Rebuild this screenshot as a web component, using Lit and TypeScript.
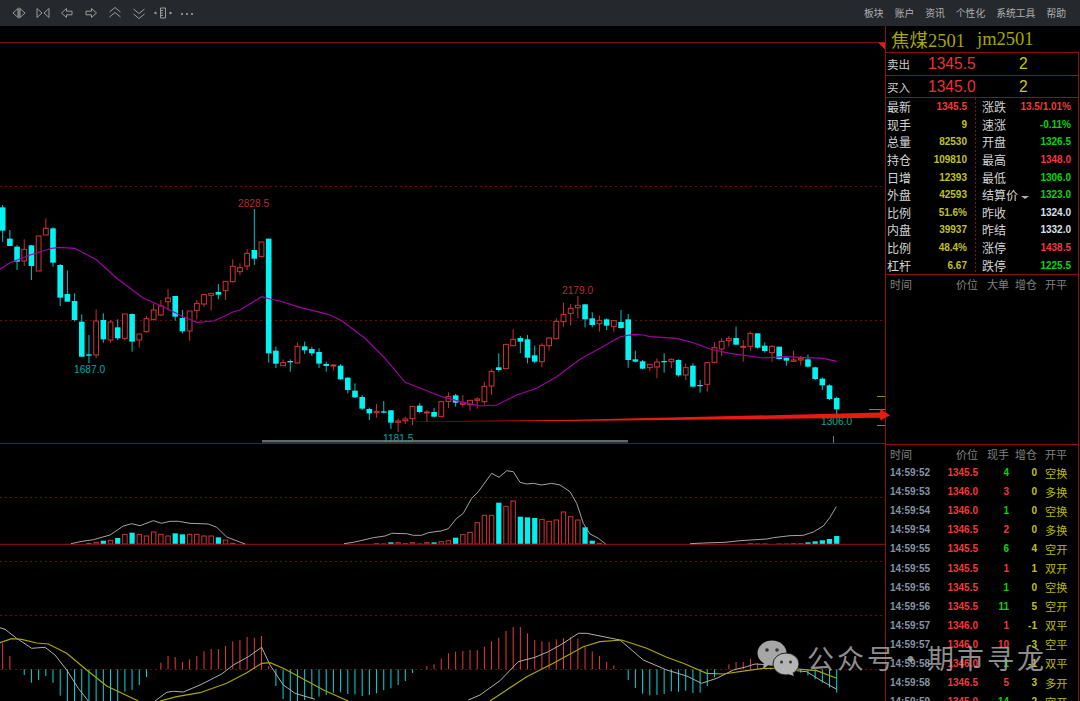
import { LitElement, html, css, svg } from "lit";
import { customElement } from "lit/decorators.js";

const STEP = 7.19;
const X0 = 2.67;
const cx = (i: number) => X0 + STEP * i;

// candles were read off 3x crops: [kind, wickTop, bodyTop, bodyBottom, wickBottom], kind 0 = cyan, 1 = red
type Row = [number, number, number, number, number];
const seg1: Row[] = [
  [0, 45, 52, 122, 155], [0, 120, 146, 168, 168], [0, 165, 170, 215, 240], [1, 148, 178, 213, 228],
  [0, 165, 166, 228, 270], [1, 138, 138, 243, 243], [1, 85, 115, 135, 135], [0, 112, 115, 218, 230],
  [0, 222, 225, 323, 348], [0, 241, 312, 335, 335], [0, 310, 333, 390, 395], [0, 373, 395, 500, 500],
  [0, 435, 493, 497, 520], [1, 358, 393, 495, 505], [0, 370, 390, 448, 458], [1, 390, 396, 450, 458],
  [0, 388, 412, 445, 450], [1, 372, 372, 445, 452], [0, 370, 372, 455, 485], [1, 432, 432, 450, 472],
  [1, 378, 386, 425, 428], [1, 340, 360, 388, 392], [1, 330, 348, 375, 378], [1, 297, 324, 335, 362],
  [0, 318, 318, 380, 392], [0, 360, 384, 424, 430], [1, 363, 363, 423, 452], [1, 330, 340, 361, 388],
  [1, 312, 314, 342, 350], [1, 310, 310, 316, 362], [0, 282, 306, 314, 328], [1, 273, 274, 302, 330],
  [1, 208, 229, 275, 277], [1, 220, 233, 245, 255], [1, 178, 190, 228, 240], [0, 57, 180, 206, 225],
  [1, 155, 156, 200, 200], [0, 146, 146, 490, 518],
];
const seg2: Row[] = [
  [0, 200, 212, 251, 264], [1, 238, 248, 257, 258], [0, 238, 243, 247, 275],
  [1, 187, 199, 249, 250], [0, 185, 199, 211, 222], [0, 200, 207, 220, 228], [0, 205, 216, 251, 264],
  [0, 245, 252, 258, 275], [1, 252, 255, 258, 272], [0, 252, 257, 298, 300], [0, 292, 293, 330, 340],
  [0, 310, 332, 352, 354], [0, 345, 351, 386, 390], [0, 383, 387, 400, 420], [1, 372, 394, 398, 413],
  [0, 363, 394, 398, 400], [0, 390, 391, 428, 447], [1, 415, 423, 427, 456], [1, 410, 417, 422, 432],
  [1, 378, 379, 416, 435], [0, 370, 377, 396, 400], [1, 390, 396, 399, 425], [0, 384, 396, 410, 412],
  [1, 362, 365, 410, 411], [1, 337, 350, 364, 384], [0, 342, 346, 368, 380], [1, 345, 369, 373, 382],
  [1, 360, 361, 374, 392], [1, 352, 357, 361, 386], [1, 305, 319, 365, 374], [1, 268, 274, 318, 345],
  [0, 220, 262, 270, 275], [1, 192, 193, 266, 267], [1, 148, 178, 197, 198], [0, 168, 174, 185, 220],
  [0, 165, 178, 233, 250], [0, 197, 226, 245, 250], [1, 190, 196, 245, 262], [1, 172, 174, 197, 212],
  [1, 115, 124, 176, 178], [1, 68, 103, 125, 140],
];
const seg3: Row[] = [
  [1, 72, 85, 100, 137], [1, 48, 76, 83, 115], [0, 72, 73, 118, 142], [0, 97, 115, 135, 142],
  [1, 107, 121, 131, 155], [0, 115, 118, 137, 150], [1, 122, 122, 139, 155], [0, 90, 126, 144, 146],
  [0, 102, 118, 240, 263], [0, 212, 238, 245, 247], [0, 240, 244, 266, 268], [1, 252, 253, 263, 273],
  [1, 235, 246, 261, 295], [0, 220, 243, 246, 278], [1, 235, 238, 245, 265], [0, 238, 240, 286, 290],
  [1, 250, 263, 285, 300], [0, 250, 257, 320, 322], [0, 300, 315, 318, 338], [1, 246, 248, 313, 335],
  [1, 186, 203, 247, 250], [1, 175, 184, 207, 228], [1, 168, 176, 182, 200], [0, 140, 174, 194, 195],
  [1, 180, 199, 202, 245], [1, 155, 160, 199, 212], [0, 160, 160, 203, 206], [0, 187, 197, 213, 218],
  [1, 195, 199, 218, 245], [0, 200, 200, 237, 238], [0, 232, 233, 242, 257], [1, 212, 240, 244, 245],
  [1, 228, 236, 240, 256], [0, 224, 238, 260, 262], [0, 260, 262, 297, 300], [0, 292, 296, 316, 330],
  [0, 313, 316, 357, 360], [0, 350, 354, 388, 405],
];

function conv(r: Row, oy: number): Row {
  return [r[0], oy + r[1] / 3, oy + r[2] / 3, oy + r[3] / 3, oy + r[4] / 3];
}

const candles: Row[] = [
  ...seg1.map((r) => conv(r, 190)),
  ...seg2.map((r) => conv(r, 280)),
  ...seg3.map((r) => conv(r, 280)),
];

// crop coordinates to page coordinates
function pts(ox: number, oy: number, list: number[]) {
  const out: string[] = [];
  for (let i = 0; i < list.length; i += 2) {
    out.push(`${(ox + list[i] / 3).toFixed(1)},${(oy + list[i + 1] / 3).toFixed(1)}`);
  }
  return out.join(" ");
}

const ma = [
  pts(0, 190, [0,238,30,218,90,195,155,175,180,172,225,175,290,210,350,265,385,290,430,325,490,350,545,378,590,397,640,393,670,380,700,365,720,360,785,320,810,327]),
  pts(270, 280, [0,57,30,63,90,82,175,103,215,122,285,175,345,235,405,307,440,320,510,348,570,365,630,378,680,375,740,345,800,325,860,290,930,238]),
  pts(570, 280, [30,238,90,205,150,170,190,163,220,165,240,170,320,175,370,188,420,207,480,220,580,234,640,230,760,235,800,244]),
].join(" ");

const volLines = [
  pts(0, 440, [213,311,240,305,280,299,330,285,370,258,395,251,420,257,460,242,485,250,510,244,535,244,570,250,625,252,650,262,680,291,735,312]),
  pts(0, 440, [1032,311,1060,307,1120,293,1155,288,1175,280,1220,281,1240,286,1265,286,1285,278,1320,273]) + " " +
    pts(440, 440, [0,274,25,266,50,235,70,220,95,175,115,155,155,100,177,112,200,92,220,95,240,127,260,132,280,130,305,135,335,130,360,135,390,155,410,190,430,250,450,282,475,295,497,312]),
  pts(440, 440, [750,311,790,309,855,307,900,302,980,297,1000,293,1050,287,1090,286,1120,276,1150,258,1170,232,1189,200]),
];

// [index, kind, top in the 440-based crop]
const volBars: [number, number, number][] = [
  [12,0,310],[13,1,307],[14,0,302],[15,1,301],[16,0,294],[17,1,283],[18,0,278],[19,1,283],[20,1,288],[21,1,276],
  [22,1,283],[23,1,288],[24,0,280],[25,0,283],[26,1,283],[27,1,283],[28,1,288],[29,1,288],[30,0,292],[31,1,300],[32,1,310],
  [52,1,311],[53,0,311],[54,0,307],[55,1,308],[56,1,311],[57,1,308],[58,0,311],[59,1,308],[60,0,307],
  [61,1,305],[62,1,302],[63,0,293],[64,1,284],[65,1,277],[66,1,248],[67,1,226],[68,1,226],[69,0,188],[70,1,199],
  [71,1,183],[72,0,230],[73,0,232],[74,0,234],[75,1,238],[76,1,244],[77,1,240],[78,1,216],[79,1,230],[80,1,240],
  [81,0,262],[82,0,302],[83,1,310],
  [104,1,311],[105,0,311],[106,0,311],[108,0,311],[109,0,311],[110,1,311],[111,1,311],[112,0,307],[113,0,304],[114,0,301],[115,0,297],[116,0,288],
];

// [index, end of the bar in the 600-based crop], zero line is at 208
const macdBars: [number, number][] = [
  [0,130],[1,168],[3,225],[4,248],[5,240],[6,228],[7,248],[8,287],[9,303],[10,303],[11,303],[12,303],[13,303],[14,303],[15,303],[16,303],
  [17,275],[18,270],[19,255],[20,231],[22,188],[23,168],[24,171],[25,186],[26,178],[27,168],[28,154],[29,147],[30,147],[31,138],[32,124],
  [33,120],[34,111],[35,113],[36,108],[37,198],[38,258],[39,297],[40,303],[41,303],[42,300],[43,295],[44,290],[45,285],[46,278],[47,277],
  [48,282],[49,283],[50,288],[51,285],[52,280],[53,270],[54,265],[55,255],[56,243],[57,219],[59,198],[60,193],
  [61,176],[62,160],[63,155],[64,153],[65,150],[66,150],[67,140],[68,124],[69,113],[70,93],[71,81],[72,81],[73,100],[74,120],[75,124],
  [76,126],[77,118],[78,114],[79,112],[80,116],[81,140],[82,154],[83,168],[84,186],[85,196],[87,240],[88,264],[89,281],[90,286],[91,285],
  [92,282],[93,274],[94,275],[95,272],[96,279],[97,278],[98,258],[99,232],[101,193],[102,186],[103,186],[104,177],[105,190],
  [110,220],[111,218],[112,226],[113,238],[114,248],[115,262],[116,278],
];

const macdWhite = [
  pts(0, 600, [0,83,15,88,50,115,95,145,135,142,165,165,200,210,235,265,265,303]),
  pts(0, 600, [465,303,500,277,520,274,550,276,600,255,640,235,665,222,700,195,745,170,785,142,810,195,850,255,885,280,945,298]),
  pts(440, 600, [85,300,120,285,180,242,235,185,285,172,325,155,370,130,415,100,440,100,540,120,610,180,680,210,740,228,785,250,830,235,880,210,920,200,945,192,1000,195,1050,210,1100,215,1140,240,1190,268]),
];
const macdYellow = [
  pts(0, 600, [0,128,35,116,65,118,110,129,145,132,200,160,260,210,320,258,415,303]),
  pts(0, 600, [480,303,530,290,600,278,680,250,740,218,785,190,810,188,850,205,900,232,975,272,1045,303]),
  pts(440, 600, [150,303,260,230,340,190,430,140,480,125,545,120,620,145,680,172,730,190,800,220,850,222,920,212,970,205,1050,205,1130,212,1190,235]),
];

const stats = [
  ["最新", "1345.5", "r", "涨跌", "13.5/1.01%", "r"],
  ["现手", "9", "y", "速涨", "-0.11%", "g"],
  ["总量", "82530", "y", "开盘", "1326.5", "g"],
  ["持仓", "109810", "y", "最高", "1348.0", "r"],
  ["日增", "12393", "y", "最低", "1306.0", "g"],
  ["外盘", "42593", "y", "结算价", "1323.0", "g"],
  ["比例", "51.6%", "y", "昨收", "1324.0", "w"],
  ["内盘", "39937", "y", "昨结", "1332.0", "w"],
  ["比例", "48.4%", "y", "涨停", "1438.5", "r"],
  ["杠杆", "6.67", "y", "跌停", "1225.5", "g"],
];

const trades = [
  ["14:59:52", "1345.5", "4", "g", "0", "空换"],
  ["14:59:53", "1346.0", "3", "r", "0", "多换"],
  ["14:59:54", "1346.0", "1", "g", "0", "空换"],
  ["14:59:54", "1346.5", "2", "r", "0", "多换"],
  ["14:59:55", "1345.5", "6", "g", "4", "空开"],
  ["14:59:55", "1345.5", "1", "r", "1", "双开"],
  ["14:59:56", "1345.5", "1", "g", "0", "空换"],
  ["14:59:56", "1345.5", "11", "g", "5", "空开"],
  ["14:59:57", "1346.0", "1", "r", "-1", "双平"],
  ["14:59:57", "1346.0", "10", "r", "-3", "空平"],
  ["14:59:58", "1346.0", "1", "g", "-1", "双平"],
  ["14:59:58", "1346.5", "5", "r", "3", "多开"],
  ["14:59:59", "1345.0", "14", "g", "2", "空开"],
];

const icons = [
  svg`<path d="M8 4.5 3 9l5 4.5zM10 4.5 15 9l-5 4.5z"/><path d="M9 3.5v11"/>`,
  svg`<path d="M3 4.5v9L8 9zM15 4.5v9L10 9z"/>`,
  svg`<path d="M3.5 9 8.5 4.5v2.7h5.5v3.6H8.5v2.7z"/>`,
  svg`<path d="M14.5 9 9.5 4.5v2.7H4v3.6h5.5v2.7z"/>`,
  svg`<path d="M3.5 8 9 3.5 14.5 8M3.5 13 9 8.5 14.5 13"/>`,
  svg`<path d="M3.5 5 9 9.5 14.5 5M3.5 10 9 14.5 14.5 10"/>`,
  svg`<path d="M6.5 4h5v10h-5zM6.5 6.5h2.5M6.5 9h2.5M6.5 11.5h2.5"/><circle cx="1.5" cy="9" r="1.2" fill="#9a9a9a" stroke="none"/><circle cx="16.5" cy="9" r="1.2" fill="#9a9a9a" stroke="none"/>`,
  svg`<circle cx="4" cy="10" r="1" fill="#a8a8a8" stroke="none"/><circle cx="9" cy="10" r="1" fill="#a8a8a8" stroke="none"/><circle cx="14" cy="10" r="1" fill="#a8a8a8" stroke="none"/>`,
];

@customElement("app-root")
export class AppRoot extends LitElement {
  static styles = css`
    :host {
      display: block;
      width: 1080px;
      height: 701px;
      overflow: hidden;
      position: relative;
      background: #000;
      font-family: "Liberation Sans", "Noto Sans CJK SC", sans-serif;
    }
    .toolbar {
      height: 26px;
      background: #25282d;
      display: flex;
      align-items: center;
      padding-left: 10px;
      box-sizing: border-box;
    }
    .tools {
      display: flex;
      gap: 6px;
    }
    .tools svg {
      width: 18px;
      height: 18px;
      fill: none;
      stroke: #9a9a9a;
      stroke-width: 1;
    }
    .menu {
      margin-left: auto;
      display: flex;
      gap: 11px;
      padding-right: 14px;
      font-family: "Noto Sans CJK SC", sans-serif;
      font-size: 9.8px;
      color: #b0b0b0;
    }
    .main {
      display: flex;
      height: 675px;
    }
    .chart {
      flex: none;
      width: 885px;
      height: 675px;
      display: block;
      overflow: visible;
      position: relative;
      z-index: 1;
    }
    .chart text {
      font-family: "Liberation Sans", sans-serif;
      font-size: 10.2px;
    }
    .panel {
      flex: none;
      width: 194px;
      border-left: 1px solid #8c1212;
      box-sizing: border-box;
      font-family: "Noto Sans CJK SC", sans-serif;
    }
    .title {
      height: 26px;
      display: flex;
      align-items: center;
      padding-left: 5px;
      color: #a6a600;
      font-family: "Liberation Serif", "Noto Sans CJK SC", serif;
      font-size: 18.5px;
    }
    .title span {
      margin-left: 12px;
    }
    .body {
      border-right: 1px solid #8c1212;
      height: 649px;
      box-sizing: border-box;
    }
    .quote {
      height: 23px;
      border-top: 1px solid #8c1212;
      box-sizing: border-box;
      display: grid;
      grid-template-columns: 41px 91px auto;
      align-items: center;
      padding-left: 1px;
      color: #cfcfcf;
      font-size: 11.5px;
    }
    .quote + .quote {
      height: 22px;
    }
    .price,
    .qty {
      font-family: "Liberation Sans", sans-serif;
      font-size: 15.6px;
    }
    .price {
      color: #e83434;
    }
    .qty {
      color: #c8c800;
    }
    .stats {
      border-top: 1px solid #8c1212;
      height: 177px;
      box-sizing: border-box;
      display: grid;
      grid-template-columns: 89px 103px;
      grid-auto-rows: 17.6px;
      background-image: linear-gradient(#7a1414 50%, transparent 50%);
      background-size: 1px 4px;
      background-position: 89px 0;
      background-repeat: repeat-y;
    }
    .cell {
      display: flex;
      justify-content: space-between;
      align-items: center;
      color: #d4d4d4;
      font-size: 12px;
      padding-left: 1px;
      white-space: nowrap;
    }
    .cell.right {
      padding-left: 7px;
      padding-right: 7px;
    }
    .cell.left {
      padding-right: 8px;
    }
    .cell b {
      font-family: "Liberation Sans", sans-serif;
      font-size: 10px;
      font-weight: 700;
    }
    .r {
      color: #f03a3a;
    }
    .g {
      color: #00d800;
    }
    .y {
      color: #c0c020;
    }
    .w {
      color: #d8e0ea;
    }
    .caret {
      display: inline-block;
      width: 0;
      height: 0;
      margin-left: 3px;
      vertical-align: middle;
      border-left: 4px solid transparent;
      border-right: 4px solid transparent;
      border-top: 3px solid #b4b4b4;
    }
    .big {
      border-top: 1px solid #8c1212;
      height: 170px;
      box-sizing: border-box;
    }
    .trades {
      border-top: 1px solid #8c1212;
    }
    .row {
      display: grid;
      grid-template-columns: 44px 44px 31px 28px 38px;
      padding-left: 4px;
      align-items: center;
      height: 19.1px;
      white-space: nowrap;
    }
    .head {
      height: 18px;
      color: #808080;
      font-size: 11px;
    }
    .head > :nth-child(n + 2):nth-child(-n + 4) {
      text-align: right;
    }
    .head > :last-child,
    .row .kind {
      padding-left: 8px;
    }
    .row b {
      font-family: "Liberation Sans", sans-serif;
      font-size: 10px;
      font-weight: 700;
      text-align: right;
    }
    .row b.time {
      color: #8793a3;
      text-align: left;
    }
    .row .kind {
      color: #b8b800;
      font-size: 11.2px;
    }
    .mark {
      position: absolute;
      left: 757px;
      top: 638px;
      z-index: 2;
      display: flex;
      align-items: center;
      color: rgba(168, 168, 168, 0.86);
      font-family: "Noto Sans CJK SC", sans-serif;
      font-size: 27px;
      letter-spacing: 3px;
      white-space: nowrap;
    }
    .mark svg {
      width: 42px;
      height: 37px;
      margin-right: 8px;
    }
  `;

  renderCandles() {
    return candles.map(([k, t, a, b, d], i) => {
      const x = cx(i);
      if (k === 0) {
        return svg`<path d="M${x} ${t}V${d}" stroke="#00c4c4"/><rect x=${x - 2.8} y=${a} width="5.6" height=${Math.max(b - a, 1.2)} fill="#00f4f4"/>`;
      }
      return svg`<path d="M${x} ${t}V${d}" stroke="#c83030"/><rect x=${x - 2.4} y=${a} width="4.8" height=${Math.max(b - a, 1)} fill="#000" stroke="#d43434"/>`;
    });
  }

  renderVol() {
    return volBars.map(([i, k, top]) => {
      const y = 440 + top / 3;
      const h = 544 - y;
      return k === 0
        ? svg`<rect x=${cx(i) - 2.6} y=${y} width="5.2" height=${h} fill="#00f0f0"/>`
        : svg`<rect x=${cx(i) - 2.2} y=${y} width="4.4" height=${h} fill="#000" stroke="#d03434"/>`;
    });
  }

  renderMacd() {
    return macdBars.map(([i, end]) => {
      const y = 600 + end / 3;
      const up = end < 208;
      return svg`<path d="M${cx(i)} ${y}V669.3" stroke=${up ? "#e63a3a" : "#00d8d8"}/>`;
    });
  }

  renderChart() {
    const dash = [186.5, 320.5, 497.5, 561.5, 615.5, 669.5];
    return html`<svg class="chart" viewBox="0 26 885 675" fill="none" stroke-width="1">
      <path d="M0 42.5H885" stroke="#800f0f"/>
      <path d="M878 42.5h7v7z" fill="#d82020"/>
      ${dash.map((y) => svg`<path d="M0 ${y}H885" stroke="#6a0c0c" stroke-dasharray="2 3"/>`)}
      <path d="M262 441.3H628" stroke="#666" stroke-width="2.4"/>
      <path d="M833.5 436V443" stroke="#777"/>
      <path d="M877 396.5h8M869 409.5h16M877 425.5h8" stroke="#8a8a10"/>
      ${this.renderCandles()}
      <polyline points=${ma} stroke="#a400a4" stroke-width="1.2"/>
      ${this.renderVol()}
      <path d="M0 443.5H885M0 544.3H885" stroke="#800f0f" stroke-width="1.2"/>
      ${volLines.map((p) => svg`<polyline points=${p} stroke="#a4a4a4"/>`)}
      ${this.renderMacd()}
      ${macdWhite.map((p) => svg`<polyline points=${p} stroke="#b0b0b0"/>`)}
      ${macdYellow.map((p) => svg`<polyline points=${p} stroke="#a8a800" stroke-width="1.2"/>`)}
      <text x="238" y="207" fill="#b42e2e" stroke="none">2828.5</text>
      <text x="74" y="373" fill="#00a8a8" stroke="none">1687.0</text>
      <text x="562" y="294" fill="#b42e2e" stroke="none">2179.0</text>
      <text x="383" y="441.5" fill="#00a8a8" stroke="none">1181.5</text>
      <text x="821" y="425" fill="#00a8a8" stroke="none">1306.0</text>
      <path d="M370 421.8 575 419.8 880 412.6 880.5 409 890 415.2 880.5 420.5 880 417.8 575 421z" fill="#e81a12"/>
    </svg>`;
  }

  render() {
    return html`
      <div class="toolbar">
        <div class="tools">
          ${icons.map((i) => html`<svg viewBox="0 0 18 18">${i}</svg>`)}
        </div>
        <div class="menu">
          <span>板块</span><span>账户</span><span>资讯</span><span>个性化</span><span>系统工具</span><span>帮助</span>
        </div>
      </div>
      <div class="main">
        ${this.renderChart()}
        <div class="panel">
          <div class="title">焦煤2501<span>jm2501</span></div>
          <div class="body">
            <div class="quote"><span>卖出</span><span class="price">1345.5</span><span class="qty">2</span></div>
            <div class="quote"><span>买入</span><span class="price">1345.0</span><span class="qty">2</span></div>
            <div class="stats">
              ${stats.map(
                (s) => html`
                  <div class="cell left"><span>${s[0]}</span><b class=${s[2]}>${s[1]}</b></div>
                  <div class="cell right">
                    <span>${s[3]}${s[3] === "结算价" ? html`<i class="caret"></i>` : ""}</span><b class=${s[5]}>${s[4]}</b>
                  </div>
                `
              )}
            </div>
            <div class="big">
              <div class="row head"><span>时间</span><span>价位</span><span>大单</span><span>增仓</span><span>开平</span></div>
            </div>
            <div class="trades">
              <div class="row head"><span>时间</span><span>价位</span><span>现手</span><span>增仓</span><span>开平</span></div>
              ${trades.map(
                (t) => html`<div class="row">
                  <b class="time">${t[0]}</b><b class="r">${t[1]}</b><b class=${t[3]}>${t[2]}</b><b class="y">${t[4]}</b>
                  <span class="kind">${t[5]}</span>
                </div>`
              )}
            </div>
          </div>
        </div>
      </div>
      <div class="mark">
        <svg viewBox="0 0 42 37">
          <ellipse cx="15" cy="14" rx="14.5" ry="12.5" fill="#a6a6a6"/>
          <path d="M7 23 6 30 13 25z" fill="#a6a6a6"/>
          <circle cx="10" cy="11" r="1.8" fill="#333"/><circle cx="20" cy="11" r="1.8" fill="#333"/>
          <ellipse cx="29" cy="25" rx="13" ry="11" fill="#b4b4b4" stroke="#222" stroke-width="1"/>
          <path d="M35 33 37 37 31 35z" fill="#b4b4b4"/>
          <circle cx="24.5" cy="23" r="1.5" fill="#333"/><circle cx="33.5" cy="23" r="1.5" fill="#333"/>
        </svg>
        <span>公众号</span><span>·</span><span>期市寻龙</span>
      </div>
    `;
  }
}
